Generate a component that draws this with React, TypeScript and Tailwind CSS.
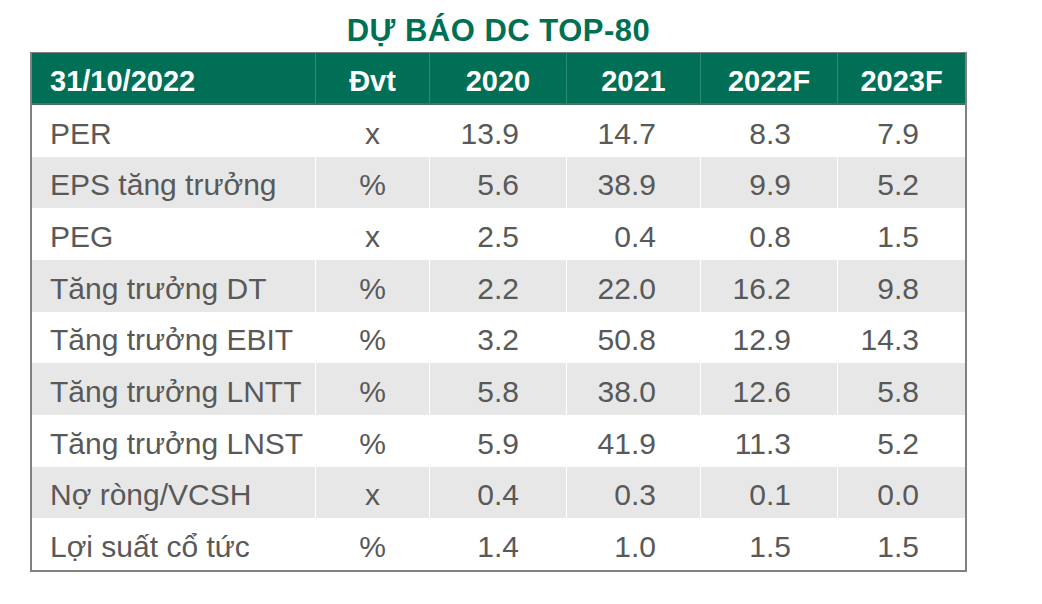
const headers = ["31/10/2022", "Đvt", "2020", "2021", "2022F", "2023F"];

const rows = [
  ["PER", "x", "13.9", "14.7", "8.3", "7.9"],
  ["EPS tăng trưởng", "%", "5.6", "38.9", "9.9", "5.2"],
  ["PEG", "x", "2.5", "0.4", "0.8", "1.5"],
  ["Tăng trưởng DT", "%", "2.2", "22.0", "16.2", "9.8"],
  ["Tăng trưởng EBIT", "%", "3.2", "50.8", "12.9", "14.3"],
  ["Tăng trưởng LNTT", "%", "5.8", "38.0", "12.6", "5.8"],
  ["Tăng trưởng LNST", "%", "5.9", "41.9", "11.3", "5.2"],
  ["Nợ ròng/VCSH", "x", "0.4", "0.3", "0.1", "0.0"],
  ["Lợi suất cổ tức", "%", "1.4", "1.0", "1.5", "1.5"],
];

// column widths inside the 2px side borders
const cols = ["w-[283px]", "w-[114px]", "w-[137px]", "w-[134px]", "w-[137px]", "w-[128px]"];
const bodyAlign = [
  "justify-start pl-[18px]",
  "justify-center",
  "justify-end pr-[47px]",
  "justify-end pr-[44px]",
  "justify-end pr-[46px]",
  "justify-end pr-[46px]",
];

export default function App() {
  return (
    <div className="w-[1042px] h-[604px] bg-white overflow-hidden font-['Liberation_Sans',Arial,sans-serif]">
      <div className="ml-[30px] w-[937px]">
        <h1 className="h-[52px] pt-[14px] text-center text-[31px] leading-[34px] tracking-[0.5px] font-bold text-[#007053]">
          DỰ BÁO DC TOP-80
        </h1>

        <div className="border-x-2 border-b-2 border-t border-[#808080]">
          <div className="flex h-[52px] bg-[#006f56] border-b-2 border-[#4f6f66]">
            {headers.map((h, i) => (
              <div
                key={h}
                className={`${cols[i]} flex items-center pt-[5px] text-[29px] leading-[34px] font-bold text-white ${
                  i === 0 ? "justify-start pl-[18px]" : "justify-center border-l border-[#2b8c73]"
                }`}
              >
                {h}
              </div>
            ))}
          </div>

          {rows.map((r, ri) => (
            <div key={r[0]} className={`flex h-[51.67px] ${ri % 2 === 1 ? "bg-[#e7e7e7]" : "bg-white"}`}>
              {r.map((c, i) => (
                <div
                  key={i}
                  className={`${cols[i]} ${bodyAlign[i]} flex items-center pt-[6px] text-[30px] leading-[34px] text-[#595959] ${
                    i === 0 ? "" : "border-l border-white"
                  }`}
                >
                  {c}
                </div>
              ))}
            </div>
          ))}
        </div>
      </div>
    </div>
  );
}
